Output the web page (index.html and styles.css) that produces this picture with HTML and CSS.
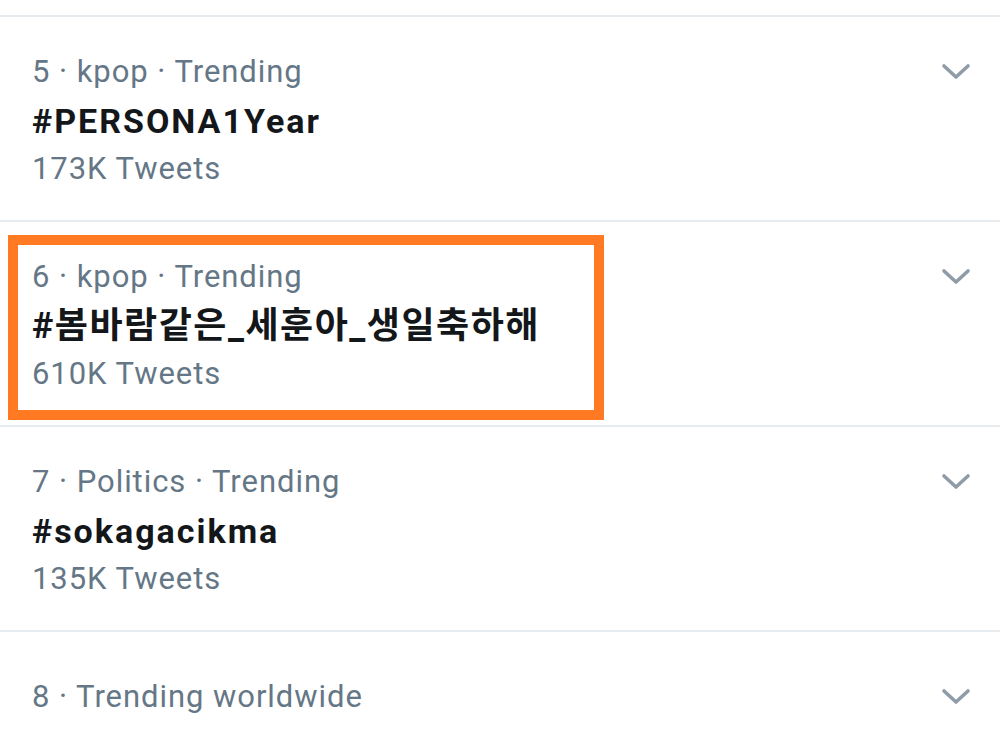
FILE: index.html
```html
<!DOCTYPE html>
<html lang="en">
<head>
<meta charset="utf-8">
<title>Trends</title>
<link rel="stylesheet" href="styles.css">
</head>
<body>
<div class="list">
  <div class="row">
    <div class="text">
      <div class="meta">5 · kpop · Trending</div>
      <div class="title">#PERSONA1Year</div>
      <div class="count">173K Tweets</div>
    </div>
    <svg class="chev" viewBox="0 0 30 18" width="30" height="18"><path d="M3 3 L15 14 L27 3" fill="none" stroke="#8f9ca8" stroke-width="3.6" stroke-linecap="round" stroke-linejoin="round"/></svg>
  </div>
  <div class="row">
    <div class="text">
      <div class="meta">6 · kpop · Trending</div>
      <div class="title title-kr">#봄바람같은_세훈아_생일축하해</div>
      <div class="count">610K Tweets</div>
    </div>
    <svg class="chev" viewBox="0 0 30 18" width="30" height="18"><path d="M3 3 L15 14 L27 3" fill="none" stroke="#8f9ca8" stroke-width="3.6" stroke-linecap="round" stroke-linejoin="round"/></svg>
    <div class="highlight"></div>
  </div>
  <div class="row">
    <div class="text">
      <div class="meta">7 · Politics · Trending</div>
      <div class="title">#sokagacikma</div>
      <div class="count">135K Tweets</div>
    </div>
    <svg class="chev" viewBox="0 0 30 18" width="30" height="18"><path d="M3 3 L15 14 L27 3" fill="none" stroke="#8f9ca8" stroke-width="3.6" stroke-linecap="round" stroke-linejoin="round"/></svg>
  </div>
  <div class="row row-last">
    <div class="text">
      <div class="meta">8 · Trending worldwide</div>
      <div class="title">HairiMayOomanicId</div>
    </div>
    <svg class="chev" viewBox="0 0 30 18" width="30" height="18"><path d="M3 3 L15 14 L27 3" fill="none" stroke="#8f9ca8" stroke-width="3.6" stroke-linecap="round" stroke-linejoin="round"/></svg>
  </div>
</div>
</body>
</html>
```
FILE: styles.css
```css
html, body {
  margin: 0;
  padding: 0;
  background: #ffffff;
}
body {
  width: 1000px;
  height: 733px;
  overflow: hidden;
  font-family: Roboto, "Noto Sans", "Noto Sans CJK KR", sans-serif;
}
.list {
  padding-top: 15px;
}
.row {
  position: relative;
  display: flex;
  justify-content: space-between;
  align-items: flex-start;
  height: 205px;
  box-sizing: border-box;
  border-top: 2px solid #e6ecf0;
  padding: 31px 29px 0 32px;
}
.text {
  display: flex;
  flex-direction: column;
}
.meta, .count {
  font-size: 31px;
  line-height: 48.5px;
  letter-spacing: 0.95px;
  color: #657786;
  white-space: nowrap;
}
.title {
  font-size: 34px;
  line-height: 48.5px;
  letter-spacing: 2px;
  font-weight: 700;
  color: #14171a;
  white-space: nowrap;
}
.title-kr {
  font-family: Roboto, "Noto Sans CJK KR", sans-serif;
  font-size: 36px;
  letter-spacing: 1.5px;
}
.chev {
  margin-top: 15px;
  display: block;
}
.row-last {
  padding-top: 41px;
}
.highlight {
  position: absolute;
  left: 8px;
  top: 13px;
  width: 596px;
  height: 185px;
  box-sizing: border-box;
  border: 10px solid #ff7a23;
  pointer-events: none;
}
```
